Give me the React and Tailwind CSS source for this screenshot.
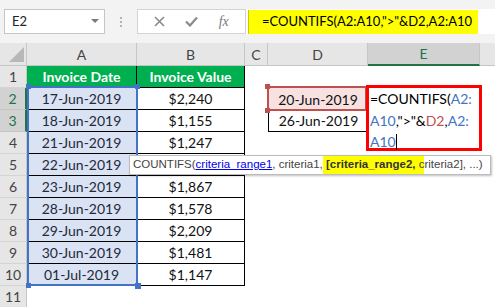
import React from "react";

const cols = "grid grid-cols-[27px_110px_108px_23px_100px_112px_15px]";

const rows = [
  { n: 1, a: "Invoice Date", b: "Invoice Value" },
  { n: 2, a: "17-Jun-2019", b: "$2,240", d: "20-Jun-2019" },
  { n: 3, a: "18-Jun-2019", b: "$1,155", d: "26-Jun-2019" },
  { n: 4, a: "21-Jun-2019", b: "$1,247" },
  { n: 5, a: "22-Jun-2019", b: "" },
  { n: 6, a: "23-Jun-2019", b: "$1,867" },
  { n: 7, a: "28-Jun-2019", b: "$1,578" },
  { n: 8, a: "29-Jun-2019", b: "$2,209" },
  { n: 9, a: "30-Jun-2019", b: "$1,481" },
  { n: 10, a: "01-Jul-2019", b: "$1,147" },
  { n: 11 },
];

const Handle = ({ className }) => (
  <div className={"absolute w-[5px] h-[5px] " + className} />
);

const FormulaBar = () => (
  <div className="h-[43px] flex items-start pt-[9px] pl-[4px]">
    <div className="w-[101px] h-[25px] bg-white border border-[#c6c6c6] flex items-center justify-between pl-[7px] pr-[5px] text-[13px] text-[#222]">
      <span>E2</span>
      <svg width="8" height="5" viewBox="0 0 8 5">
        <polygon points="0,0 8,0 4,4" fill="#7a7a7a" />
      </svg>
    </div>
    <div className="w-[32px] h-[25px] flex flex-col items-center justify-center gap-[2px]">
      <div className="w-[2px] h-[2px] bg-[#b4b4b4]" />
      <div className="w-[2px] h-[2px] bg-[#b4b4b4]" />
      <div className="w-[2px] h-[2px] bg-[#b4b4b4]" />
    </div>
    <div className="w-[109px] h-[25px] bg-white border border-[#d4d4d4] flex items-center justify-around px-[6px]">
      <svg width="11" height="11" viewBox="0 0 11 11">
        <path d="M1 1 L10 10 M10 1 L1 10" stroke="#8a8a8a" strokeWidth="1.6" />
      </svg>
      <svg width="13" height="11" viewBox="0 0 13 11">
        <path d="M1 5.5 L5 9.5 L12 1.5" stroke="#8a8a8a" strokeWidth="2.2" fill="none" />
      </svg>
      <span className="font-['Liberation_Serif',serif] italic text-[14px] text-[#7a7a7a] leading-none">
        fx
      </span>
    </div>
    <div className="flex-1 h-[25px] bg-white pl-[2px] pt-[1px]">
      <div className="w-[230px] h-[24px] bg-[#ffff00] border-l border-[#c8c800] flex items-center pl-[13px] text-[13px] text-black whitespace-nowrap">
        =COUNTIFS(A2:A10,"&gt;"&amp;D2,A2:A10
      </div>
    </div>
  </div>
);

const ColumnHeaders = () => (
  <div className={cols + " h-[23px] text-[14px] text-[#444]"}>
    <div className="relative bg-[#e6e6e6] border-r border-b border-[#c6c6c6]">
      <svg className="absolute right-[2px] bottom-[3px]" width="15" height="15" viewBox="0 0 15 15">
        <polygon points="15,0 15,15 0,15" fill="#b8b8b8" />
      </svg>
    </div>
    {["A", "B", "C", "D"].map((c) => (
      <div
        key={c}
        className="flex items-center justify-center bg-[#e6e6e6] border-r border-b border-[#c6c6c6]"
      >
        {c}
      </div>
    ))}
    <div className="flex items-center justify-center bg-[#d2d2d2] border-r border-[#c6c6c6] border-b-2 border-b-[#217346] text-[#217346]">
      E
    </div>
    <div className="bg-[#e6e6e6] border-b border-[#c6c6c6]" />
  </div>
);

const Row = ({ r }) => {
  const sel = r.n === 2 || r.n === 3;
  const head = r.n === 1;
  const data = r.n >= 2 && r.n <= 10;
  return (
    <div className={cols + " h-[22px] text-[14px]"}>
      <div
        className={
          sel
            ? "flex items-center justify-center bg-[#d2d2d2] text-[#217346] border-b border-[#c6c6c6] border-r-2 border-r-[#217346]"
            : "flex items-center justify-center bg-[#e6e6e6] text-[#444] border-b border-[#d4d4d4] border-r border-r-[#c6c6c6]"
        }
      >
        {r.n}
      </div>
      {head && (
        <>
          <div className="flex items-center justify-center bg-[#00b050] text-white font-bold border-r border-b border-black">
            {r.a}
          </div>
          <div className="flex items-center justify-center bg-[#00b050] text-white font-bold border-r border-b border-black">
            {r.b}
          </div>
        </>
      )}
      {data && (
        <>
          <div className="flex items-center justify-center bg-[#dae3f3] text-[#1f2a3a] border-r border-b border-black">
            {r.a}
          </div>
          <div className="flex items-center justify-center bg-white text-[#111] border-r border-b border-black">
            {r.b}
          </div>
        </>
      )}
      {r.n === 11 && (
        <>
          <div className="bg-white" />
          <div className="bg-white" />
        </>
      )}
      <div className="bg-white" />
      {r.n === 2 ? (
        <div className="flex items-center justify-center bg-[#f7e1e1] text-[#111]">{r.d}</div>
      ) : r.n === 3 ? (
        <div className="flex items-center justify-center bg-white text-[#111] border-l border-b border-black">
          {r.d}
        </div>
      ) : (
        <div className="bg-white" />
      )}
      <div className="bg-white" />
      <div className="bg-white" />
    </div>
  );
};

export default function App() {
  return (
    <div className="w-[495px] h-[307px] overflow-hidden bg-[#f3f3f3] font-['Lato',sans-serif]">
      <FormulaBar />
      <ColumnHeaders />
      <div className="relative">
        {rows.map((r) => (
          <Row key={r.n} r={r} />
        ))}

        {/* range reference A2:A10 */}
        <div className="absolute left-[27px] top-[20px] w-[111px] h-[200px] border-2 border-[#4472c4]" />
        <Handle className="left-[26px] top-[18px] bg-[#4472c4]" />
        <Handle className="left-[135px] top-[18px] bg-[#4472c4]" />
        <Handle className="left-[26px] top-[217px] bg-[#4472c4]" />
        <Handle className="left-[135px] top-[217px] bg-[#4472c4] w-[6px] h-[6px]" />

        {/* range reference D2 */}
        <div className="absolute left-[267px] top-[20px] w-[100px] h-[25px] border-2 border-[#c0504d]" />
        <Handle className="left-[265px] top-[18px] bg-[#c0504d]" />
        <Handle className="left-[265px] top-[42px] bg-[#c0504d]" />

        {/* active selection edge */}
        <div className="absolute left-[480px] top-[62px] w-[2px] h-[5px] bg-[#217346]" />

        {/* in-cell editor */}
        <div className="absolute left-[366px] top-[19px] w-[116px] h-[66px] bg-white border-[3px] border-[#ff0000] pl-[1px] text-[14px] leading-[21.5px] text-black whitespace-nowrap">
          <div>
            =COUNTIFS(<span className="text-[#4472c4]">A2:</span>
          </div>
          <div>
            <span className="text-[#4472c4]">A10</span>,"&gt;"&amp;
            <span className="text-[#c0504d]">D2</span>,
            <span className="text-[#4472c4]">A2:</span>
          </div>
          <div className="flex items-center">
            <span className="text-[#4472c4]">A10</span>
            <span className="inline-block w-px h-[16px] bg-black" />
          </div>
        </div>

        {/* function tooltip */}
        <div className="absolute left-[129px] top-[89px] w-[362px] h-[20px] bg-white border border-[#bcbcbc] shadow-[1px_1px_2px_rgba(0,0,0,0.25)] flex items-stretch pl-[3px] font-['Liberation_Sans',sans-serif] text-[11.5px] text-[#444] whitespace-nowrap">
          <span className="flex items-center">COUNTIFS(</span>
          <span className="flex items-center text-[#0000ee] underline">criteria_range1</span>
          <span className="flex items-center">
            <span className="whitespace-pre">, criteria1,</span>
          </span>
          <span className="flex items-center bg-[#ffff00]">
            <span className="whitespace-pre">
              {" "}
              <b className="text-[#333]">[criteria_range2,</b> c
            </span>
          </span>
          <span className="flex items-center">riteria2], ...)</span>
        </div>
      </div>
    </div>
  );
}
